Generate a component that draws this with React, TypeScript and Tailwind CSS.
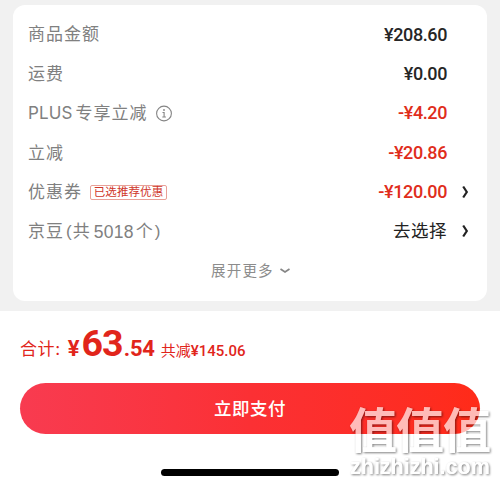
import type { ReactNode } from "react";

const RightArrow = () => (
  <svg className="h-3.5 w-2" viewBox="0 0 8 14" fill="none" stroke="#222" strokeWidth="2.2">
    <path d="M2.2 1.5L5.8 7L2.2 12.5" />
  </svg>
);

const InfoIcon = () => (
  <svg className="ml-2 size-[18px]" viewBox="0 0 18 18" fill="none" stroke="#858585">
    <circle cx="9" cy="8.5" r="7.4" strokeWidth="1.1" />
    <path d="M7.5 7.5H9.1V12M7.3 12H10.9" strokeWidth="1.1" />
    <circle cx="9" cy="5" r="0.9" fill="#858585" stroke="none" />
  </svg>
);

type Row = { label: ReactNode; value: string; tone: string; arrow?: boolean };

const money = "font-['Roboto','Noto_Sans_CJK_SC',sans-serif] text-[18px] font-medium tracking-[-0.4px]";

const rows: Row[] = [
  { label: "商品金额", value: "¥208.60", tone: `${money} text-[#262626]` },
  { label: "运费", value: "¥0.00", tone: `${money} text-[#262626]` },
  {
    label: (
      <>
        <span className="mr-[3px] tracking-[0.1px]">PLUS</span>专享立减
        <InfoIcon />
      </>
    ),
    value: "-¥4.20",
    tone: `${money} text-[#e02d1b]`,
  },
  { label: "立减", value: "-¥20.86", tone: `${money} text-[#e02d1b]` },
  {
    label: (
      <>
        优惠券
        <span className="ml-2 flex h-[15px] w-[77px] items-center justify-center rounded-[2px] border border-[#e9a198] text-[11.5px] tracking-[0.1px] text-[#cf3528]">
          已选推荐优惠
        </span>
      </>
    ),
    value: "-¥120.00",
    tone: `${money} text-[#e02d1b]`,
    arrow: true,
  },
  {
    label: (
      <>
        京豆<span className="mr-px ml-0.5 font-['Liberation_Sans'] tracking-[0px]">(</span>共
        <span className="mr-0.5 ml-[3px] font-['Liberation_Sans'] text-[17.5px] tracking-[0.3px]">5018</span>个
        <span className="ml-px font-['Liberation_Sans'] tracking-[0px]">)</span>
      </>
    ),
    value: "去选择",
    tone: "text-[17.5px] tracking-[0.5px] text-[#222]",
    arrow: true,
  },
];

const DetailRow = ({ label, value, tone, arrow }: Row) => (
  <li className="flex h-[39.4px] items-center pl-[15px] text-[17px] tracking-[1px] text-[#808080]">
    <span className="flex items-center pt-0.5">{label}</span>
    <span className={`ml-auto ${tone}`}>{value}</span>
    <span className="flex w-[40px] justify-start pl-[13.5px]">{arrow && <RightArrow />}</span>
  </li>
);

// The shadow is cut out under the letters, so they stay clear over the button.
const Watermark = () => (
  <div className="absolute top-[400px] left-[349px] font-['Noto_Sans_CJK_SC',sans-serif] whitespace-nowrap text-white [filter:url(#stamp)]">
    <svg className="absolute size-0">
      <filter id="stamp" x="-10%" y="-10%" width="120%" height="120%" colorInterpolationFilters="sRGB">
        <feGaussianBlur in="SourceAlpha" stdDeviation="0.9" />
        <feOffset dx="1.2" dy="1.2" />
        <feComposite in2="SourceAlpha" operator="out" />
        <feComponentTransfer result="shade">
          <feFuncA type="linear" slope="0.5" />
        </feComponentTransfer>
        <feComponentTransfer in="SourceGraphic" result="letters">
          <feFuncA type="linear" slope="0.68" />
        </feComponentTransfer>
        <feMerge>
          <feMergeNode in="shade" />
          <feMergeNode in="letters" />
        </feMerge>
      </filter>
    </svg>
    <div className="text-[48px] leading-[54px] font-bold tracking-[-1px]">值值值</div>
    <div className="mt-[3px] ml-px font-['Liberation_Sans',sans-serif] text-[21.5px] leading-[20px] font-bold">
      zhizhizhi.com
    </div>
  </div>
);

export default function App() {
  return (
    <main className="relative h-[486px] w-[500px] overflow-hidden bg-[#f1f1f1] font-['Inter','Noto_Sans_CJK_SC',sans-serif] whitespace-nowrap">
      <div className="h-[311px] px-[13px] pt-[5px]">
        <section className="h-[296px] rounded-xl bg-white pt-[9.5px]">
          <ul>
            {rows.map((row, i) => (
              <DetailRow key={i} {...row} />
            ))}
          </ul>
          <div className="flex h-[40px] items-center pl-[198px] text-[14.5px] tracking-[1.2px] text-[#8c8c8c]">
            展开更多
            <svg className="ml-[5px] h-2 w-3" viewBox="0 0 12 8" fill="none" stroke="#858585" strokeWidth="1.7">
              <path d="M1.5 2L6 5L10.5 2" />
            </svg>
          </div>
        </section>
      </div>

      <footer className="h-[175px] bg-white px-5">
        <div className="flex h-[72px] items-baseline pt-1 text-[#e1251b]">
          <span className="relative -top-px text-[17px] tracking-[0.6px]">合计:</span>
          <span className="ml-[7px] font-['Roboto',sans-serif] text-[22px] font-bold">¥</span>
          <span className="ml-0.5 font-['Roboto',sans-serif] text-[37.5px] font-bold tracking-[-0.9px]">63</span>
          <span className="ml-px font-['Roboto',sans-serif] text-[22px] font-bold tracking-[-0.2px]">.54</span>
          <span className="ml-1.5 text-[15px]">共减</span>
          <span className="font-['Roboto',sans-serif] text-[15px] font-medium">¥145.06</span>
        </div>
        <button className="flex h-[51px] w-[460px] items-center justify-center rounded-full bg-linear-to-r from-[#f83b50] via-[#fb3034] to-[#ff2b18] pt-px text-[17.5px] font-medium tracking-[0.5px] text-white">
          立即支付
        </button>
        <div className="mx-auto mt-[35px] h-[7px] w-[178px] rounded-full bg-black" />
      </footer>
      <Watermark />
    </main>
  );
}
